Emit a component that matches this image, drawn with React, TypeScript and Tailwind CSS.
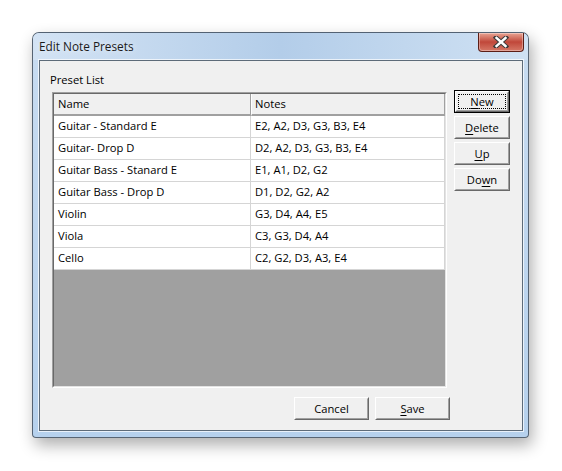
const presets = [
  { name: "Guitar - Standard E", notes: "E2, A2, D3, G3, B3, E4" },
  { name: "Guitar- Drop D", notes: "D2, A2, D3, G3, B3, E4" },
  { name: "Guitar Bass - Stanard E", notes: "E1, A1, D2, G2" },
  { name: "Guitar Bass - Drop D", notes: "D1, D2, G2, A2" },
  { name: "Violin", notes: "G3, D4, A4, E5" },
  { name: "Viola", notes: "C3, G3, D4, A4" },
  { name: "Cello", notes: "C2, G2, D3, A3, E4" },
];

function WinButton({
  label,
  hotkey,
  isDefault,
  wide,
}: {
  label: string;
  hotkey?: number;
  isDefault?: boolean;
  wide?: boolean;
}) {
  const text =
    hotkey === undefined ? (
      label
    ) : (
      <>
        {label.slice(0, hotkey)}
        <span className="underline underline-offset-2">{label[hotkey]}</span>
        {label.slice(hotkey + 1)}
      </>
    );

  return (
    <div
      className={`${wide ? "w-[75px]" : "w-[56px]"} h-[23px] ${
        isDefault ? "border border-black" : ""
      }`}
    >
      <div className="h-full w-full border border-t-white border-l-white border-b-[#696969] border-r-[#696969] bg-[#f0f0f0]">
        <div
          className={`flex h-full w-full border border-t-[#f0f0f0] border-l-[#f0f0f0] border-b-[#a0a0a0] border-r-[#a0a0a0] ${
            isDefault ? "p-[1px]" : ""
          }`}
        >
          <div
            className={`flex flex-1 items-center justify-center leading-[14px] ${
              isDefault ? "border border-dotted border-black" : ""
            }`}
          >
            <span>{text}</span>
          </div>
        </div>
      </div>
    </div>
  );
}

export default function App() {
  return (
    <div
      className="h-[471px] w-[562px] bg-white pl-[32px] pt-[32px] text-[11.2px] text-black"
      style={{ fontFamily: '"Open Sans", "Noto Sans", sans-serif' }}
    >
      <div className="flex h-[406px] w-[497px] flex-col rounded-t-[7px] rounded-b-[4px] border border-[#3b4654]/80 bg-gradient-to-b from-[#c8dcf1] to-[#b6d1ed] shadow-[3px_7px_16px_rgba(0,0,0,0.32)]">
        {/* title bar */}
        <div className="flex h-[27px] items-start justify-between rounded-t-[6px] bg-gradient-to-r from-[#d3e3f4] via-[#b3cde9] to-[#cfe1f3] pl-[6px] pr-[4px]">
          <span className="mt-[5px] text-[11.8px] text-[#1a1a1a] [text-shadow:0_0_6px_rgba(255,255,255,0.9)]">
            Edit Note Presets
          </span>
          <div className="flex h-[19px] w-[46px] items-center justify-center rounded-b-[4px] border border-t-0 border-[#5c1e16] bg-gradient-to-b from-[#e8a393] via-[#c0473a] to-[#d57766] shadow-[inset_0_0_0_1px_rgba(255,255,255,0.35)]">
            <svg width="18" height="12" viewBox="0 0 18 12">
              <path
                d="M4 1.5 L14 10.5 M14 1.5 L4 10.5"
                stroke="#3a3a3a"
                strokeWidth="4.4"
                strokeLinecap="square"
              />
              <path
                d="M4.5 2 L13.5 10 M13.5 2 L4.5 10"
                stroke="#ffffff"
                strokeWidth="2.4"
                strokeLinecap="square"
              />
            </svg>
          </div>
        </div>

        {/* client area */}
        <div className="ml-[6px] h-[371px] w-[484px] border border-[#5d6b79] bg-[#f0f0f0] pl-[10px] pt-[11px] shadow-[0_0_0_1px_rgba(255,255,255,0.7)]">
          <div className="mb-[2px] h-[16px] leading-[16px]">Preset List</div>

          <div className="flex items-start">
            {/* grid */}
            <div className="ml-[2px] mt-[2px] h-[296px] w-[395px] border border-t-[#a0a0a0] border-l-[#a0a0a0] border-b-white border-r-white">
              <div className="flex h-full w-full flex-col border border-t-[#696969] border-l-[#696969] border-b-[#e3e3e3] border-r-[#e3e3e3] bg-[#a0a0a0]">
                <div className="flex h-[22px] bg-[#f0f0f0]">
                  <div className="flex w-[197px] items-center border-r border-b-2 border-r-[#a0a0a0] border-b-[#a0a0a0] pl-[4px]">
                    Name
                  </div>
                  <div className="flex flex-1 items-center border-r border-b-2 border-l border-l-white border-r-[#a0a0a0] border-b-[#a0a0a0] pl-[3px]">
                    Notes
                  </div>
                </div>
                {presets.map((p) => (
                  <div key={p.name} className="flex h-[22px] bg-white">
                    <div className="flex w-[197px] items-center border-r border-b border-[#d5d5d5] pl-[4px]">
                      {p.name}
                    </div>
                    <div className="flex flex-1 items-center border-r border-b border-[#d5d5d5] pl-[4px]">
                      {p.notes}
                    </div>
                  </div>
                ))}
              </div>
            </div>

            {/* side buttons */}
            <div className="ml-[7px] flex flex-col gap-[3px]">
              <WinButton label="New" hotkey={0} isDefault />
              <WinButton label="Delete" hotkey={0} />
              <WinButton label="Up" hotkey={0} />
              <WinButton label="Down" hotkey={2} />
            </div>
          </div>

          <div className="mt-[9px] flex gap-[6px] pl-[244px]">
            <WinButton label="Cancel" wide />
            <WinButton label="Save" hotkey={0} wide />
          </div>
        </div>
      </div>
    </div>
  );
}
